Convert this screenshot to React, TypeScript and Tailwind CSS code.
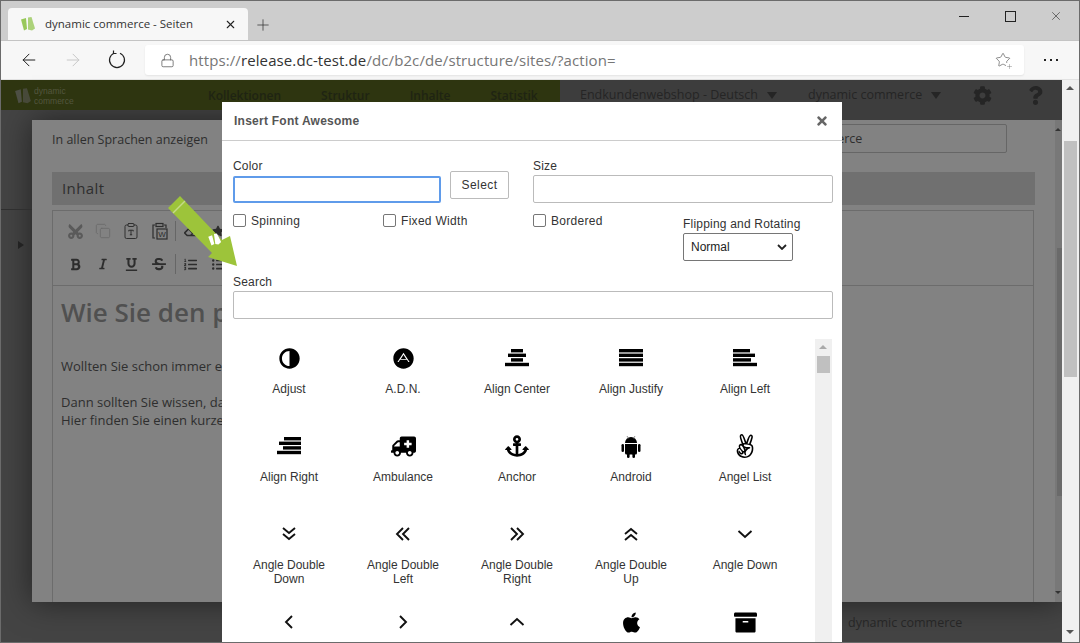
import React from "react";
import {
  FaAdn, FaAdjust, FaAmbulance, FaAnchor, FaAngellist, FaApple, FaArchive,
  FaBold, FaCog, FaCut, FaEraser, FaItalic, FaListOl, FaListUl, FaQuestion, FaStar, FaStrikethrough, FaTimes, FaUnderline,
} from "react-icons/fa";
import { ArrowLeft, ArrowRight, ClipboardType, Copy, Lock, Plus, Star, X } from "lucide-react";

const sans = "font-['Liberation_Sans',Arial,sans-serif]";
const open = "font-['Open_Sans',sans-serif]";

function Bars({ rows }: { rows: [number, number][] }) {
  return (
    <svg width="24" height="20" viewBox="0 0 24 20" fill="#000">
      {rows.map(([x, w], i) => (
        <rect key={i} x={x} y={1 + i * 4.6} width={w} height={3.4} />
      ))}
    </svg>
  );
}

function Angle({ d }: { d: string }) {
  return (
    <svg width="20" height="20" viewBox="0 0 20 20" fill="none" stroke="#111" strokeWidth="1.9">
      <path d={d} />
    </svg>
  );
}

function Android() {
  return (
    <svg width="20" height="23" viewBox="0 0 20 23" fill="#000">
      <path d="M4 8a6 6 0 0 1 12 0z" />
      <path d="M4 9h12v9a1.5 1.5 0 0 1-1.5 1.5H5.500A1.5 1.5 0 0 1 4 18z" />
      <rect x="0.500" y="9" width="2.500" height="8" rx="1.250" />
      <rect x="17" y="9" width="2.500" height="8" rx="1.250" />
      <rect x="6" y="18" width="2.600" height="5" rx="1.300" />
      <rect x="11.400" y="18" width="2.600" height="5" rx="1.300" />
      <path d="M6 1l1.500 2.500M14 1l-1.500 2.500" stroke="#666" strokeWidth="0.7" />
    </svg>
  );
}

function Reload() {
  return (
    <svg width="20" height="20" viewBox="0 0 20 20" fill="none" stroke="#222" strokeWidth="1.2">
      <path d="M7 3.200a7.500 7.500 0 1 0 6 0" />
      <path d="M12.500 1v3h3" transform="translate(-6 -0.500) rotate(0)" />
    </svg>
  );
}

function Logo({ color, size }: { color: string; size: number }) {
  return (
    <svg width={size} height={size} viewBox="0 0 16 16" className="shrink-0">
      <path d="M1 3.500l5-1.500 1 11-3 1.500z" fill={color} />
      <path d="M8 1.500l3.500-.5 3.500 11.500-3 2-4-1z" fill={color} opacity="0.8" />
    </svg>
  );
}

function PasteWord() {
  return (
    <svg width="17" height="18" viewBox="0 0 17 18" fill="none" stroke="#2d2d2d" strokeWidth="1.2">
      <path d="M4 3H2v13h2M13 3h2v3" />
      <rect x="5" y="1.500" width="7" height="3" />
      <rect x="6" y="7" width="10" height="10" />
      <text x="11" y="15" fontSize="8" fill="#2d2d2d" stroke="none" textAnchor="middle" fontFamily="Liberation Sans">W</text>
    </svg>
  );
}

const icons: [string, React.ReactNode][] = [
  ["Adjust", <FaAdjust size={21} className="-scale-x-100" />],
  ["A.D.N.", <FaAdn size={21} />],
  ["Align Center", <Bars rows={[[6, 12], [3, 18], [6, 12], [0, 24]]} />],
  ["Align Justify", <Bars rows={[[0, 24], [0, 24], [0, 24], [0, 24]]} />],
  ["Align Left", <Bars rows={[[0, 17], [0, 22], [0, 18], [0, 24]]} />],
  ["Align Right", <Bars rows={[[7, 17], [2, 22], [6, 18], [0, 24]]} />],
  ["Ambulance", <FaAmbulance size={25} className="-scale-x-100" />],
  ["Anchor", <FaAnchor size={24} />],
  ["Android", <Android />],
  ["Angel List", <FaAngellist size={24} />],
  ["Angle Double Down", <Angle d="M4 4l6 5 6-5M4 10l6 5 6-5" />],
  ["Angle Double Left", <Angle d="M10 4l-6 6 6 6M16 4l-6 6 6 6" />],
  ["Angle Double Right", <Angle d="M4 4l6 6-6 6M10 4l6 6-6 6" />],
  ["Angle Double Up", <Angle d="M4 10l6-5 6 5M4 16l6-5 6 5" />],
  ["Angle Down", <Angle d="M3.500 7l6.500 6 6.500-6" />],
  // last row is cut by the window, the labels sit below the fold
  ["", <Angle d="M13 4l-6 6 6 6" />],
  ["", <Angle d="M7 4l6 6-6 6" />],
  ["", <Angle d="M3.500 13l6.500-6 6.500 6" />],
  ["", <FaApple size={23} />],
  ["", <FaArchive size={23} />],
];

function Checkbox({ label, className }: { label: string; className: string }) {
  return (
    <label className={`flex items-center gap-[5px] ${className}`}>
      <span className="w-[13px] h-[13px] rounded-[2px] border border-[#767676] bg-white" />
      <span className="text-[12px] tracking-[0.3px] text-[#333]">{label}</span>
    </label>
  );
}

function Cell({ children }: { children: React.ReactNode }) {
  return <div className="w-[28px] flex justify-center">{children}</div>;
}

function Editor() {
  return (
    <div className="w-[982px] h-[392px] ml-5 mt-[5px] border border-[#6c6c6c] border-b-0">
      <div className="h-[75px] border-b border-[#6c6c6c] pl-[8px] pt-[5px] text-[#2d2d2d]">
        <div className="flex items-center h-[30px]">
          <Cell><FaCut size={17} className="text-[#5a5a5a] -rotate-90" /></Cell>
          <Cell><Copy size={16} strokeWidth={1.2} className="text-[#6a6a6a]" /></Cell>
          <Cell><ClipboardType size={18} strokeWidth={1.3} /></Cell>
          <Cell><PasteWord /></Cell>
          <div className="ml-[2px] w-px h-[20px] bg-[#666]" />
          <Cell><FaEraser size={12} /></Cell>
          <Cell><FaStar size={12} /></Cell>
        </div>
        <div className="flex items-center h-[30px] mt-[3px]">
          <Cell><FaBold size={13} /></Cell>
          <Cell><FaItalic size={12} /></Cell>
          <Cell><FaUnderline size={13} /></Cell>
          <Cell><FaStrikethrough size={14} /></Cell>
          <div className="ml-[2px] w-px h-[20px] bg-[#666]" />
          <Cell><FaListOl size={13} /></Cell>
          <Cell><FaListUl size={13} /></Cell>
        </div>
      </div>
      <div className={`${open} pl-2 text-[#2e2e2e]`}>
        <h1 className="mt-[8px] text-[26px] leading-[36px] font-semibold text-[#505050]">Wie Sie den p</h1>
        <p className="mt-[27px] text-[13px] leading-[18px]">Wollten Sie schon immer e</p>
        <p className="mt-[18px] text-[13px] leading-[18px]">Dann sollten Sie wissen, da</p>
        <p className="text-[13px] leading-[18px]">Hier finden Sie einen kurze</p>
      </div>
    </div>
  );
}

export default function App() {
  return (
    <div className={`relative w-[1080px] h-[643px] overflow-hidden flex flex-col border border-[#6b6b6b] bg-[#444444] ${sans}`}>
      {/* tab strip */}
      <div className="h-[40px] shrink-0 bg-[#cdcdcd] flex items-end pl-[7px] border-b border-[#c4c4c4]">
        <div className="w-[240px] h-[32px] bg-[#f7f7f7] rounded-t-[4px] flex items-center pl-[12px] pr-[11px]">
          <Logo color="#98c85a" size={16} />
          <span className={`ml-[9px] text-[11.5px] text-[#333] grow ${open}`}>dynamic commerce - Seiten</span>
          <X size={13} className="text-[#222]" />
        </div>
        <Plus size={18} strokeWidth={1} className="ml-[6px] mb-[6px] text-[#333]" />
        <div className="ml-auto flex items-center self-start mt-[8px] text-[#222]">
          <div className="w-[46px] flex justify-center"><div className="w-[10px] h-px bg-[#222]" /></div>
          <div className="w-[46px] flex justify-center"><div className="w-[11px] h-[11px] border border-[#222]" /></div>
          <div className="w-[46px] flex justify-center"><X size={14} strokeWidth={1} /></div>
        </div>
      </div>
      {/* address bar */}
      <div className="h-[39px] shrink-0 bg-[#f7f7f7] flex items-center pl-[18px] border-b border-[#e2e2e2]">
        <ArrowLeft size={20} strokeWidth={1.2} className="text-[#222]" />
        <ArrowRight size={20} strokeWidth={1.2} className="ml-[24px] text-[#c8c8c8]" />
        <div className="ml-[24px]"><Reload /></div>
        <div className="ml-[18px] w-[879px] h-[30px] bg-white rounded-[3px] flex items-center pl-[15px] pr-[11px] shadow-[0_1px_2px_rgba(0,0,0,0.08)]">
          <Lock size={15} strokeWidth={1.2} className="text-[#555]" />
          <span className={`ml-[14px] text-[15px] tracking-[0.1px] text-[#767676] grow ${open}`}>
            https://<span className="text-[#333]">release.dc-test.de</span>/dc/b2c/de/structure/sites/?action=
          </span>
          <div className="relative mr-[2px]">
            <Star size={16} strokeWidth={1} className="text-[#555]" />
            <Plus size={7} strokeWidth={1.2} className="absolute -right-[2px] -bottom-[2px] bg-white text-[#555]" />
          </div>
        </div>
        <div className="ml-[20px] flex gap-[4px]">
          <span className="w-[2px] h-[2px] bg-[#222]" />
          <span className="w-[2px] h-[2px] bg-[#222]" />
          <span className="w-[2px] h-[2px] bg-[#222]" />
        </div>
      </div>
      {/* dimmed page */}
      <div className={`relative grow flex flex-col ${open}`}>
        <div className="relative z-10 h-[40px] shrink-0 flex text-[#252525] text-[12.5px]">
          <div className="w-[559px] h-[30px] pt-px bg-[#2e3510] flex items-center text-[12px] font-semibold text-[#1f2413]">
            <div className="ml-[13px]"><Logo color="#4d4f44" size={18} /></div>
            <div className={`ml-[2px] w-[174px] text-[8.5px] leading-[10px] font-normal text-[#53563f] ${sans}`}>
              <div>dynamic</div>
              <div>commerce</div>
            </div>
            <span>Kollektionen</span>
            <span className="ml-[40px]">Struktur</span>
            <span className="ml-[40px]">Inhalte</span>
            <span className="ml-[40px]">Statistik</span>
          </div>
          <div className="grow h-[40px] bg-[#3d3d3d]">
            <div className="h-[30px] pt-px flex items-center pl-[20px]">
              <span>Endkundenwebshop - Deutsch</span>
              <span className="ml-[9px] border-x-[5.5px] border-x-transparent border-t-[7px] border-t-[#252525]" />
              <span className="ml-[31px]">dynamic commerce</span>
              <span className="ml-[9px] border-x-[5.5px] border-x-transparent border-t-[7px] border-t-[#252525]" />
              <FaCog size={19} className="ml-[32px]" />
              <FaQuestion size={19} className="ml-[34px]" />
            </div>
          </div>
        </div>
        <div className="relative grow">
          <div className="absolute left-[31px] top-0 w-[1030px] h-[482px] bg-[#828282] shadow-[0_0_30px_rgba(0,0,0,0.5)]">
            <div className="h-[52px] pl-5 pt-[11px] text-[12.5px] text-[#2e2e2e]">In allen Sprachen anzeigen</div>
            <div className="w-[983px] h-[33px] ml-5 pl-[10px] bg-[#707070] text-[15px] leading-[33px] tracking-[0.4px] text-[#2e2e2e]">Inhalt</div>
            <Editor />
            <div className="absolute left-[705px] top-[4px] w-[270px] h-[29px] pl-[10px] border border-[#666] rounded-[2px] text-[12.5px] leading-[27px] text-[#2e2e2e]">dynamic commerce</div>
            <div className="absolute right-0 top-0 bottom-0 w-[7px] bg-[#787878]">
              <div className="absolute right-0 top-[128px] w-[5px] h-[248px] bg-[#6a6a6a]" />
              <div className="absolute left-0 top-[8px] border-x-[3px] border-x-transparent border-b-[3px] border-b-[#333]" />
              <div className="absolute left-0 bottom-[8px] border-x-[3px] border-x-transparent border-t-[3px] border-t-[#333]" />
            </div>
          </div>
          <div className="absolute left-0 top-[89px] w-[31px] h-px bg-[#2f2f2f]" />
          <div className="absolute left-[17px] top-[121px] border-y-[4.5px] border-y-transparent border-l-[6px] border-l-[#222]" />
          <div className="absolute left-[847px] bottom-[9px] text-[12.5px] text-[#262626]">dynamic commerce</div>
        </div>
        {/* browser scrollbar */}
        <div className="absolute z-10 right-0 top-0 bottom-0 w-[17px] bg-[#f0f0f0]">
          <div className="absolute left-[2px] top-[61px] w-[13px] h-[236px] bg-[#c0c0c0]" />
          <div className="absolute left-[4px] top-[6px] border-x-[4px] border-x-transparent border-b-[4px] border-b-[#555]" />
          <div className="absolute left-[4px] bottom-[8px] border-x-[4px] border-x-transparent border-t-[4px] border-t-[#555]" />
        </div>
      </div>
      {/* modal */}
      <div className="absolute z-20 left-[221px] top-[101px] w-[620px] h-[541px] bg-white overflow-hidden">
        <div className="h-[39px] border-b border-[#ccc] flex items-center justify-between pl-3 pr-[13px]">
          <span className="text-[12px] font-bold tracking-[0.25px] text-[#555]">Insert Font Awesome</span>
          <FaTimes size={14} className="text-[#666]" />
        </div>
        <div className="relative px-[11px]">
          <div className="flex pt-[18px]">
            <div className="w-[300px] shrink-0">
              <div className="text-[12px] leading-[14px] tracking-[0.2px] text-[#333]">Color</div>
              <div className="flex items-start">
                <input className="mt-[3px] w-[208px] h-[27px] border-2 border-[#5f9bea] rounded-[2px]" />
                <button className="-mt-[2px] ml-[9px] w-[59px] h-[28px] border border-[#bbb] rounded-[2px] text-[12px] tracking-[0.4px] text-[#333]">Select</button>
              </div>
            </div>
            <div className="w-[300px] shrink-0">
              <div className="text-[12px] leading-[14px] tracking-[0.2px] text-[#333]">Size</div>
              <input className="mt-[2px] w-[300px] h-[28px] border border-[#bbb] rounded-[2px]" />
            </div>
          </div>
          <div className="flex mt-[11px] h-[60px]">
            <Checkbox label="Spinning" className="w-[150px] h-[13px]" />
            <Checkbox label="Fixed Width" className="w-[150px] h-[13px]" />
            <Checkbox label="Bordered" className="w-[150px] h-[13px]" />
            <div className="pt-[3px]">
              <div className="text-[12px] leading-[14px] tracking-[0.2px] text-[#333]">Flipping and Rotating</div>
              <div className="mt-[2px] w-[110px] h-[28px] border border-[#767676] rounded-[2px] flex items-center justify-between pl-[7px] pr-[5px] text-[12px] text-[#222]">
                Normal
                <svg width="10" height="6" viewBox="0 0 10 6" fill="none" stroke="#222" strokeWidth="1.8"><path d="M1 1l4 4 4-4" /></svg>
              </div>
            </div>
          </div>
          <div className="mt-[1px] text-[12px] leading-[14px] tracking-[0.2px] text-[#333]">Search</div>
          <input className="block mt-[2px] w-[600px] h-[28px] border border-[#bbb] rounded-[2px]" />
        </div>
        <div className="relative flex mt-[20px] pl-[10px] h-[304px] overflow-hidden">
          <div className="grid grid-cols-[repeat(5,114px)] auto-rows-[88px]">
            {icons.map(([name, icon], i) => (
              <div key={i} className="flex flex-col items-center">
                <div className="h-[20px] mt-[9px] flex items-center justify-center text-black">{icon}</div>
                {name && <div className="mt-[14px] w-[90px] text-center text-[12px] leading-[14px] text-[#333]">{name}</div>}
              </div>
            ))}
          </div>
          <div className="absolute left-[593px] top-0 bottom-0 w-[17px] bg-[#f0f0f0]">
            <div className="absolute left-[2px] top-[17px] w-[13px] h-[17px] bg-[#c0c0c0]" />
            <div className="absolute left-[4px] top-[6px] border-x-[4px] border-x-transparent border-b-[4px] border-b-[#aaa]" />
          </div>
        </div>
      </div>
      {/* pointer arrow */}
      <svg className="absolute z-30 left-[165px] top-[192px]" width="74" height="76" viewBox="0 0 74 76">
        <path d="M2 15 L14 3 L56 47 L64 43 L71 73 L42 64 L46 60 Z" fill="#9dc43a" />
        <path d="M7 20 L19 8" stroke="#c5db8a" strokeWidth="1.500" />
        <g transform="translate(41 42) rotate(-8)">
          <path d="M1 2l4-1 1 9-3 1zM7 0l3 0 3 9-3 2-3-1z" fill="#fff" />
        </g>
      </svg>
    </div>
  );
}
